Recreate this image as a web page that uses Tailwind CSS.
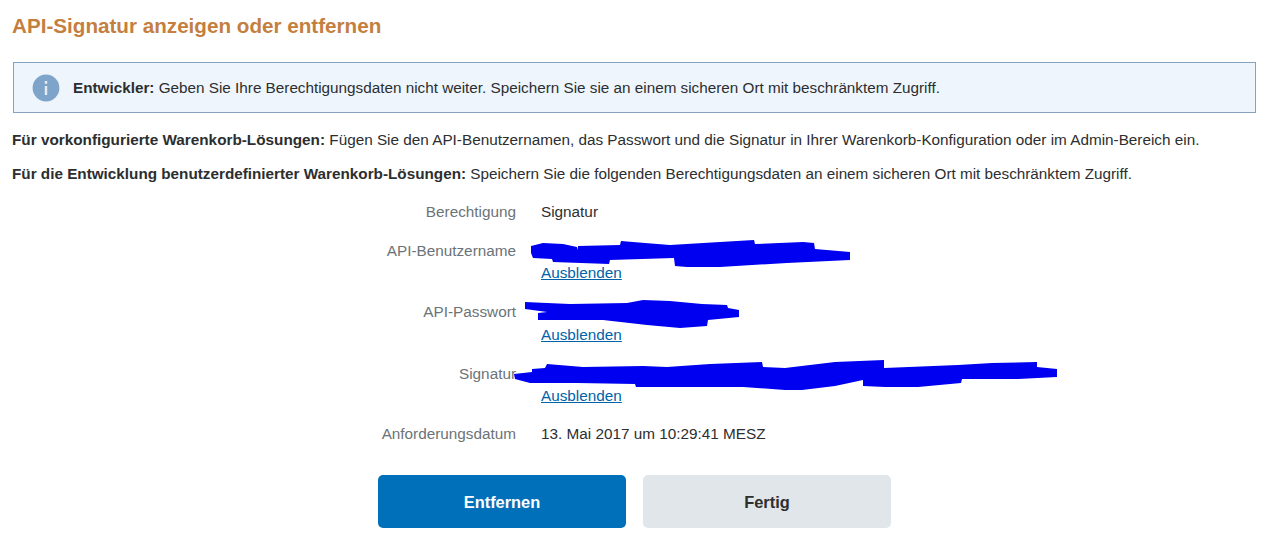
<!DOCTYPE html>
<html lang="de">
<head>
<meta charset="utf-8">
<script src="https://cdn.jsdelivr.net/npm/@tailwindcss/browser@4"></script>
</head>
<body class="bg-white font-['Liberation_Sans',Arial,sans-serif] text-[15.3px] leading-[22px] text-[#2c2e2f]">
<div class="relative h-[543px] w-[1270px] overflow-hidden pl-3 pr-[14px]">
  <h1 class="pt-[14px] text-[20.65px] leading-[24px] font-bold text-[#c47f3f]">API-Signatur anzeigen oder entfernen</h1>
  <div class="mt-[24px] ml-px flex h-[51px] items-center border border-[#86a3bd] bg-[#eef5fd] pl-[18px]">
    <svg class="h-[28px] w-[28px] shrink-0" viewBox="0 0 28 28" aria-hidden="true">
      <circle cx="14" cy="14" r="13.4" fill="#7fa4c9"/>
      <rect x="12.8" y="7" width="2.4" height="2.8" fill="#e4edf6"/>
      <rect x="12.8" y="12" width="2.4" height="9" fill="#e4edf6"/>
    </svg>
    <p class="ml-[13px] text-[15.27px]"><b>Entwickler:</b> Geben Sie Ihre Berechtigungsdaten nicht weiter. Speichern Sie sie an einem sicheren Ort mit beschränktem Zugriff.</p>
  </div>
  <p class="mt-[16px]"><b>Für vorkonfigurierte Warenkorb-Lösungen:</b> Fügen Sie den API-Benutzernamen, das Passwort und die Signatur in Ihrer Warenkorb-Konfiguration oder im Admin-Bereich ein.</p>
  <p class="mt-[12px] text-[15.27px]"><b>Für die Entwicklung benutzerdefinierter Warenkorb-Lösungen:</b> Speichern Sie die folgenden Berechtigungsdaten an einem sicheren Ort mit beschränktem Zugriff.</p>

  <div class="mt-[16px] flex flex-col gap-[17px]">
    <div class="flex gap-[25px]">
      <div class="w-[504px] text-right text-[#6c7378]">Berechtigung</div>
      <div>Signatur</div>
    </div>
    <div class="flex gap-[25px]">
      <div class="w-[504px] text-right text-[#6c7378]">API-Benutzername</div>
      <div class="flex flex-col"><span class="h-[22px]"></span><a class="text-[#0063a8] underline" href="#">Ausblenden</a></div>
    </div>
    <div class="flex gap-[25px]">
      <div class="w-[504px] text-right text-[#6c7378]">API-Passwort</div>
      <div class="flex flex-col"><span class="h-[23px]"></span><a class="text-[#0063a8] underline" href="#">Ausblenden</a></div>
    </div>
    <div class="flex gap-[25px]">
      <div class="w-[504px] text-right text-[#6c7378]">Signatur</div>
      <div class="flex flex-col"><span class="h-[22px]"></span><a class="text-[#0063a8] underline" href="#">Ausblenden</a></div>
    </div>
    <div class="-mt-px flex gap-[25px]">
      <div class="w-[504px] text-right text-[#6c7378]">Anforderungsdatum</div>
      <div>13. Mai 2017 um 10:29:41 MESZ</div>
    </div>
  </div>

  <div class="mt-[30px] ml-[366px] flex gap-[17px]">
    <button class="h-[53px] w-[248px] rounded-[5px] bg-[#0070ba] text-[16.4px] font-bold text-white">Entfernen</button>
    <button class="h-[53px] w-[248px] rounded-[5px] bg-[#e1e6ea] text-[16.4px] font-bold text-[#2c2e2f]">Fertig</button>
  </div>

  <svg class="pointer-events-none absolute top-0 left-0 h-[543px] w-[1270px]" viewBox="0 0 1270 543" aria-hidden="true">
    <polygon fill="#0000f0" points="531,246 543,243 563,244 577,247 578,250 578,246 620,245 621,241 645,243 670,245 720,242 754,240 755,244 803,242 814,243 815,249 850,252 850,260 787,263 720,267 687,267 675,266 674,258 610,260 609,264 553,262 552,259 533,258 531,253"/>
    <polygon fill="#0000f0" points="525,302 547,303 570,304 627,303 643,300 670,301 702,304 727,305 728,308 739,310 739,317 708,320 707,326 680,328 647,325 603,320 538,320 538,313 547,312 525,309"/>
    <polygon fill="#0000f0" points="514,374 532,372 532,369 545,368 547,364 583,367 643,366 667,367 710,364 762,362 763,367 785,368 835,362 884,360 884,368 958,365 992,363 1037,362 1037,367 1057,369 1057,377 1018,379 962,379 961,383 918,387 885,387 863,386 863,380 835,386 802,390 785,390 743,387 636,387 635,384 577,383 530,383 515,379"/>
  </svg>
</div>
</body>
</html>
